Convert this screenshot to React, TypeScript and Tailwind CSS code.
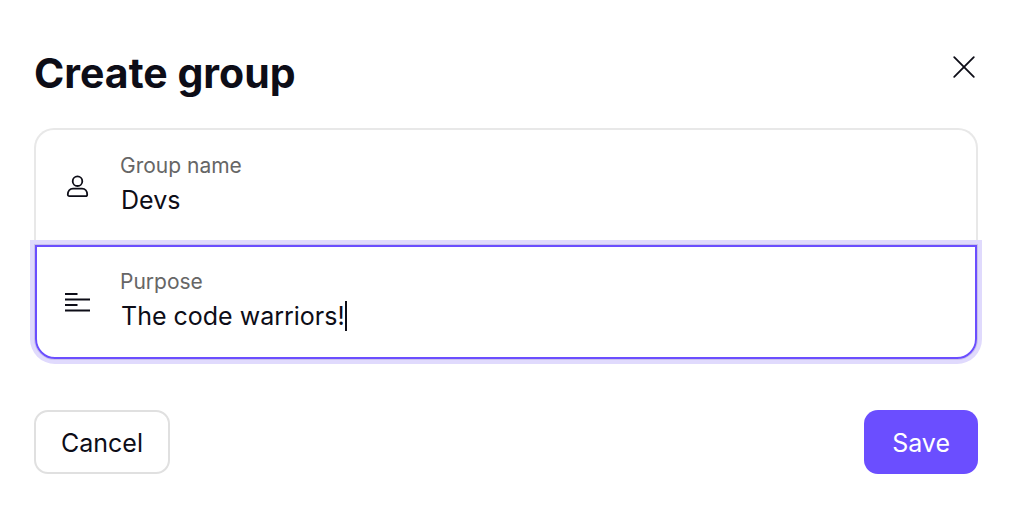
export default function App() {
  return (
    <main className="min-h-screen bg-white px-[34px] pt-[50px] pb-10 font-['Inter',sans-serif] text-[#0d0d17]">
      <form onSubmit={(e) => e.preventDefault()} className="mr-3">
        <header className="flex items-start justify-between">
          <h1 className="text-[41px] leading-[46px] font-bold">Create group</h1>
          <button type="button" aria-label="Close" className="mt-[3px]">
            <svg width="28" height="28" viewBox="0 0 28 28" fill="none" stroke="currentColor" strokeWidth="1.8" strokeLinecap="round">
              <path d="M4.2 4.2l19.6 19.6M23.8 4.2L4.2 23.8" />
            </svg>
          </button>
        </header>
        <div className="mt-8">
          <div className="flex h-[117px] items-center rounded-t-[20px] border-2 border-b-0 border-[#e8e8e8] pl-7">
            <svg className="mr-7 shrink-0" width="28" height="28" viewBox="0 0 28 28" fill="none" stroke="currentColor" strokeWidth="1.8" strokeLinejoin="round">
              <circle cx="13.5" cy="7.2" r="4.8" />
              <path d="M9 14.6h9c3.2 0 5.2 2.4 5.2 5.8 0 1.2-.6 1.8-1.7 1.8h-16c-1.1 0-1.7-.6-1.7-1.8 0-3.4 2-5.8 5.2-5.8z" />
            </svg>
            <div className="flex grow flex-col pb-[7px]">
              <label htmlFor="name" className="text-[21px] leading-8 text-[#666]">Group name</label>
              <input id="name" defaultValue="Devs" className="w-full px-px text-[25px] leading-9 outline-none" />
            </div>
          </div>
          <div className="mx-px flex h-[114px] items-center rounded-b-[20px] border-2 border-[#6b4eff] pl-[27px] shadow-[0_0_0_1px_#c9c1e9,0_0_0_5px_#e0dafd]">
            <svg className="mr-7 shrink-0" width="28" height="28" viewBox="0 0 28 28" fill="none" stroke="currentColor" strokeWidth="1.8">
              <path d="M1 6h12.500M1 11.500h25M1 17h12.500M1 22.500h25" />
            </svg>
            <div className="flex grow flex-col pb-1">
              <label htmlFor="purpose" className="text-[21px] leading-8 text-[#666]">Purpose</label>
              <div className="flex items-center">
                <input id="purpose" defaultValue="The code warriors!" className="max-w-full pl-px text-[25px] leading-9 caret-transparent outline-none [field-sizing:content]" />
                <span aria-hidden="true" className="h-[30px] w-0.5 bg-[#0d0d17]" />
              </div>
            </div>
          </div>
        </div>
        <footer className="mt-[51px] flex justify-between text-[25px]">
          <button type="button" className="h-16 rounded-[14px] border-2 border-[#e0e0e0] px-[25px] pt-1">Cancel</button>
          <button type="submit" className="h-16 rounded-[14px] bg-[#6b4eff] px-7 pt-1 text-white">Save</button>
        </footer>
      </form>
    </main>
  );
}
